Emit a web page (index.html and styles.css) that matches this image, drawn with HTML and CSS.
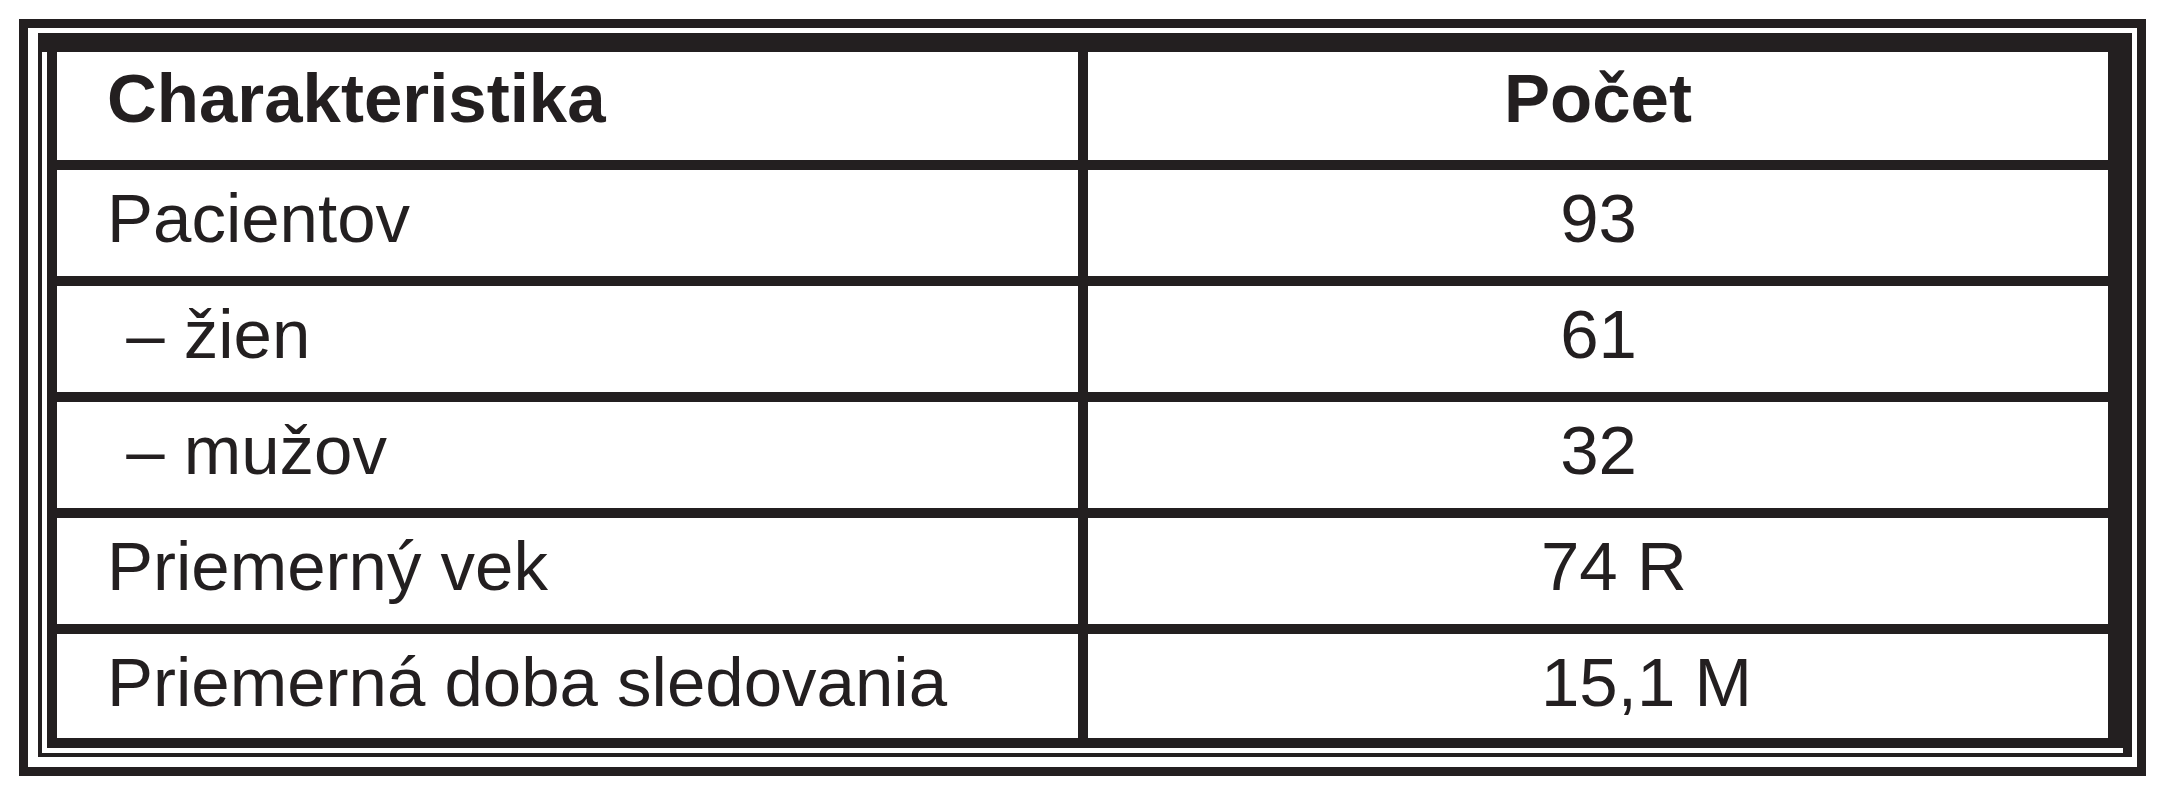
FILE: index.html
```html
<!DOCTYPE html>
<html lang="sk">
<head>
<meta charset="utf-8">
<title>Charakteristika</title>
<link rel="stylesheet" href="styles.css">
</head>
<body>
<div class="frame">
  <div class="inner">
    <div class="grid">
      <div class="cell head left">Charakteristika</div>
      <div class="cell head center">Počet</div>
      <div class="cell left">Pacientov</div>
      <div class="cell num"> 93</div>
      <div class="cell left"> – žien</div>
      <div class="cell num"> 61</div>
      <div class="cell left"> – mužov</div>
      <div class="cell num"> 32</div>
      <div class="cell left">Priemerný vek</div>
      <div class="cell num">74 R</div>
      <div class="cell left">Priemerná doba sledovania</div>
      <div class="cell num">15,1 M</div>
    </div>
  </div>
</div>
</body>
</html>
```
FILE: styles.css
```css
html, body {
  margin: 0;
  padding: 0;
  background: #ffffff;
}

body {
  padding: 19px 0 0 19px;
  font-family: "Liberation Sans", Arial, sans-serif;
  color: #231f20;
}

.frame {
  width: 2089px;
  border: 9px solid #231f20;
  padding: 5px 10px 10px 10px;
}

.inner {
  width: 2076px;
  border-style: solid;
  border-color: #231f20;
  border-width: 19px 9px 4px 4px;
  padding: 0 0 5px 5px;
}

.grid {
  display: grid;
  grid-template-columns: 1021px 1020px;
  grid-template-rows: 108px 106px 106px 106px 106px 104px;
  gap: 10px;
  padding: 0 10px 10px 10px;
  background: #231f20;
}

.cell {
  background: #ffffff;
  font-size: 69px;
  line-height: normal;
  padding-top: 9px;
  white-space: pre;
  box-sizing: border-box;
}

.head {
  font-weight: bold;
  padding-top: 7px;
}

.left {
  padding-left: 50px;
}

.center {
  text-align: center;
}

.num {
  padding-left: 453px;
}
```
